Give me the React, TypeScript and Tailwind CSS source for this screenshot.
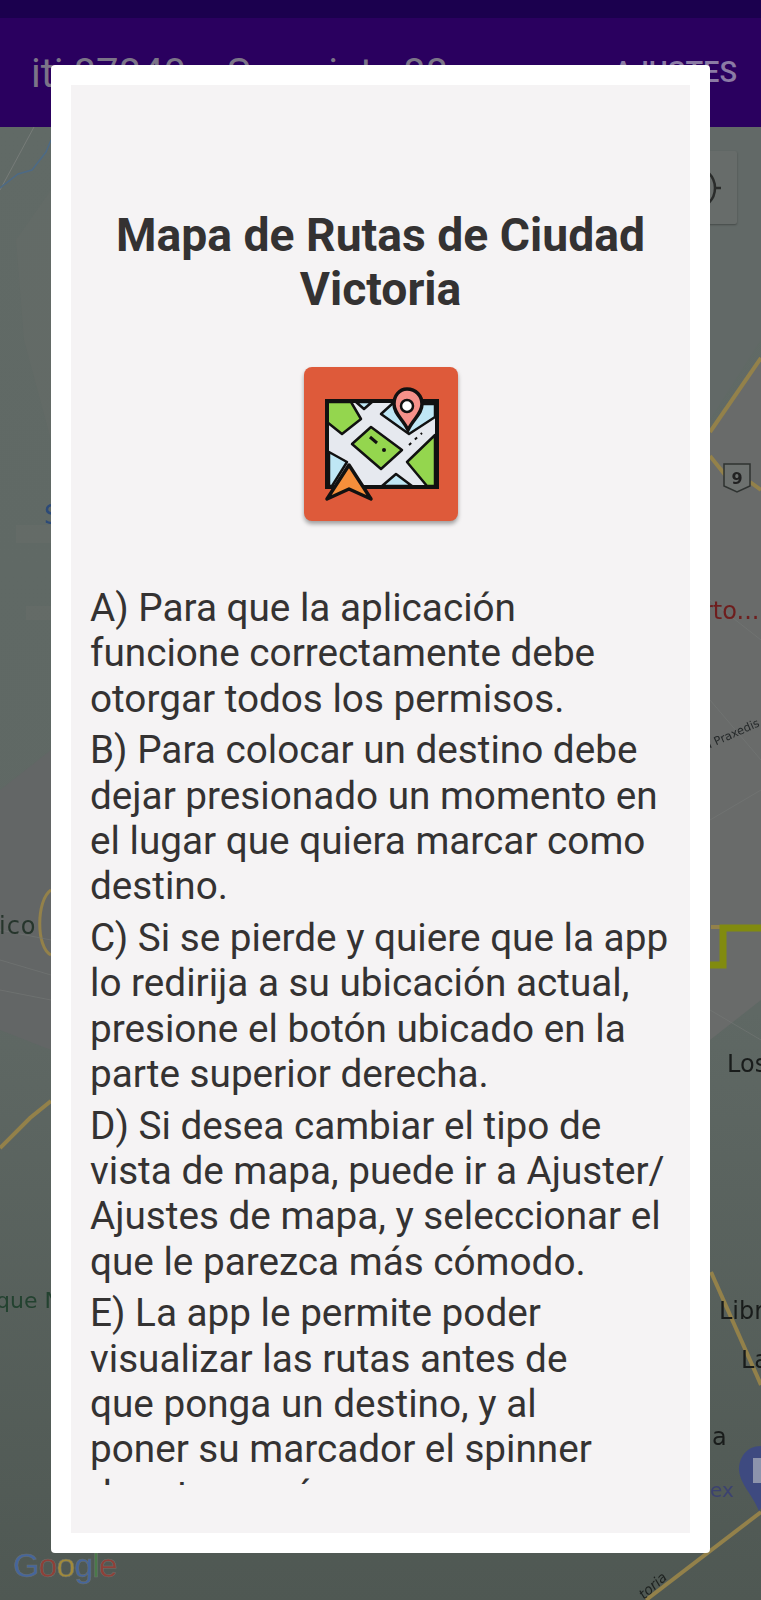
const paragraphs: string[][] = [
  [
    "A) Para que la aplicación",
    "funcione correctamente debe",
    "otorgar todos los permisos.",
  ],
  [
    "B) Para colocar un destino debe",
    "dejar presionado un momento en",
    "el lugar que quiera marcar como",
    "destino.",
  ],
  [
    "C) Si se pierde y quiere que la app",
    "lo redirija a su ubicación actual,",
    "presione el botón ubicado en la",
    "parte superior derecha.",
  ],
  [
    "D) Si desea cambiar el tipo de",
    "vista de mapa, puede ir a Ajuster/",
    "Ajustes de mapa, y seleccionar el",
    "que le parezca más cómodo.",
  ],
  [
    "E) La app le permite poder",
    "visualizar las rutas antes de",
    "que ponga un destino, y al",
    "poner su marcador el spinner",
    "de rutas será",
  ],
];

const mapFont = "'DejaVu Sans', sans-serif";

function MapDrawing() {
  return (
    <svg
      className="absolute inset-0 h-full w-full blur-[0.6px]"
      viewBox="0 127 761 1473"
      preserveAspectRatio="none"
    >
      <defs>
        <linearGradient id="shade" x1="0" y1="0" x2="0" y2="1">
          <stop offset="0" stopColor="#616a66" />
          <stop offset="0.6" stopColor="#5f6864" />
          <stop offset="1" stopColor="#4f5853" />
        </linearGradient>
      </defs>
      <rect x="0" y="127" width="761" height="1473" fill="url(#shade)" />
      <path d="M710 127H761V340L710 420Z" fill="#626967" />
      <path d="M710 430L761 360V1000L710 1040Z" fill="#696b6a" />
      <path d="M0 790L51 750V1050L0 1030Z" fill="#636666" />
      <path d="M16 240L51 190V440L24 340Z" fill="#666b67" opacity="0.5" />
      <rect x="16" y="525" width="35" height="18" fill="#6d6f6c" opacity="0.3" />
      <rect x="26" y="606" width="25" height="14" fill="#6d6f6c" opacity="0.3" />
      <path d="M0 190L34 127" stroke="#777c79" strokeWidth="1" fill="none" />
      <path
        d="M0 188L18 174L32 170L46 152L51 140"
        stroke="#4d6a86"
        strokeWidth="1.5"
        fill="none"
      />
      {/* roads */}
      <g fill="none" stroke="#93814a" strokeWidth="4">
        <path d="M0 1148L30 1118L51 1101" />
        <path d="M710 432L761 358" />
        <path d="M710 456L726 476M750 482L761 490" />
        <path d="M711 1272L761 1385" />
        <path d="M646 1600L761 1512" />
        <path d="M51 890C36 900 36 948 51 955" strokeWidth="3" />
        <path d="M711 927H722" />
      </g>
      <path
        d="M761 928H723V965H710"
        stroke="#818b0f"
        strokeWidth="7"
        fill="none"
      />
      <g stroke="#757876" strokeWidth="1" fill="none" opacity="0.6">
        <path d="M710 600L761 640M710 700L761 760M710 820L761 790" />
        <path d="M0 930L51 940M0 960L51 975M0 990L51 1000" />
        <path d="M710 1010L761 1040" />
      </g>
      {/* route shield */}
      <path
        d="M724 464H750V486L737 492L724 486Z"
        fill="#6d716f"
        stroke="#2f3331"
        strokeWidth="1.5"
      />
      <text x="737" y="484" textAnchor="middle" fontSize="16" fontWeight="700" fontFamily={mapFont} fill="#222">
        9
      </text>
      {/* gas pin */}
      <path
        d="M761 1446C746 1446 739 1458 739 1470C740 1484 752 1494 759 1511L761 1508Z"
        fill="#3e4a80"
      />
      <rect x="753" y="1458" width="8" height="25" fill="#8d94ac" />
      {/* place names behind the dialog */}
      <g fontFamily={mapFont} fontSize="24">
        <text x="44" y="524" fontSize="26" fill="#2c4a78">S</text>
        <text x="-1" y="934" fill="#26352c" letterSpacing="1">ico</text>
        <text x="-4" y="1308" fontSize="22" fill="#234230">que N</text>
        <text x="703" y="619" fill="#6e1d1d">rto...</text>
        <text x="727" y="1072" fill="#191c1b">Los</text>
        <text x="719" y="1319" fill="#191c1b">Libr</text>
        <text x="741" y="1368" fill="#191c1b">La</text>
        <text x="712" y="1445" fill="#191c1b">a</text>
        <text x="710" y="1497" fontSize="20" fill="#3c4270">ex</text>
        <text
          x="706"
          y="750"
          fontSize="11.5"
          fill="#25292a"
          transform="rotate(-24 706 750)"
        >
          d Praxedis
        </text>
        <text
          x="644"
          y="1600"
          fontSize="14"
          fontStyle="italic"
          fill="#1e2220"
          transform="rotate(-42 644 1600)"
        >
          toria
        </text>
      </g>
      <text
        x="13"
        y="1577"
        fontFamily="'Liberation Sans', sans-serif"
        fontSize="34"
        letterSpacing="-1"
        stroke="#6b716e"
        strokeWidth="0.5"
      >
        <tspan fill="#45659c">G</tspan>
        <tspan fill="#8f4038">o</tspan>
        <tspan fill="#a18a3a">o</tspan>
        <tspan fill="#45659c">g</tspan>
        <tspan fill="#4a7a4a">l</tspan>
        <tspan fill="#8f4038">e</tspan>
      </text>
    </svg>
  );
}

function AppIcon() {
  return (
    <div className="flex h-[154px] w-[154px] items-center justify-center rounded-[8px] bg-[#de5a3a] shadow-[0_3px_4px_rgba(0,0,0,0.35)]">
      <svg width="154" height="154" viewBox="0 0 154 154">
        <rect x="23" y="34" width="110" height="86" fill="#e6e9ef" />
        <g stroke="#111" strokeWidth="2.5" strokeLinejoin="round">
          <path d="M23 35H47L57 52L38 67L23 55Z" fill="#94d64e" />
          <path d="M48 77L67 60L98 83L77 102Z" fill="#94d64e" />
          <path d="M103 95L131 68V119H123Z" fill="#94d64e" />
          <path d="M77 47L88 37H131V50L105 67Z" fill="#bfe7f5" />
          <path d="M25 85V119H28L43 95Z" fill="#bfe7f5" />
          <path d="M78 119L92 107L108 119Z" fill="#bfe7f5" />
          <path d="M52 35L60 42L68 35Z" fill="#bfe7f5" />
        </g>
        <path d="M66 70L73 76" stroke="#111" strokeWidth="3" />
        <circle cx="80" cy="83" r="2" fill="#111" />
        <path d="M105 78L118 66" stroke="#111" strokeWidth="2" strokeDasharray="3 5" />
        <rect
          x="23"
          y="34"
          width="110"
          height="86"
          fill="none"
          stroke="#111"
          strokeWidth="4"
        />
        <path
          d="M103 22C112 22 118 29 118 37C118 47 109 52 104 63C99 52 90 47 90 37C90 29 95 22 103 22Z"
          fill="#f5918a"
          stroke="#111"
          strokeWidth="3.5"
        />
        <circle cx="103" cy="39" r="6" fill="#fff" stroke="#111" strokeWidth="2.5" />
        <path
          d="M45 98L67 132L45 122L23 132Z"
          fill="#f58f3b"
          stroke="#111"
          strokeWidth="3.5"
          strokeLinejoin="round"
        />
      </svg>
    </div>
  );
}

export default function App() {
  return (
    <div className="relative flex h-[1600px] w-[761px] flex-col overflow-hidden font-['Roboto',sans-serif]">
      <div className="h-[18px] bg-[#1b004e]" />
      <div className="flex h-[109px] items-start justify-between bg-[#2a005f] pl-[31px] pr-[24px] pt-[31px] text-[40px] leading-[50px] text-[#7b7488]">
        <span>iti 87840 -&nbsp; Sesprint&nbsp;&nbsp; 88</span>
        <span className="text-[29px] font-medium leading-[46px] text-[#8b7ba5]">AJUSTES</span>
      </div>
      <div className="relative flex-1 overflow-hidden">
        <MapDrawing />
        {/* location button */}
        <div className="absolute left-[651px] top-[24px] flex h-[73px] w-[86px] items-center justify-center rounded-[2px] bg-[#676c6a] shadow-[0_1px_2px_rgba(0,0,0,0.3)]">
          <svg width="56" height="56" viewBox="0 0 56 56" fill="none" stroke="#2a2c2b" strokeWidth="2.5">
            <circle cx="28" cy="28" r="21" />
            <path d="M28 1V7M28 49V55M1 28H7M49 28H55" />
          </svg>
        </div>
      </div>

      {/* dialog */}
      <div className="absolute left-[51px] top-[65px] h-[1488px] w-[659px] rounded-[4px] bg-white p-[20px]">
        <div className="flex h-full flex-col items-center overflow-hidden bg-[#f5f3f4] pt-[123px]">
          <h1 className="text-center text-[46.25px] font-bold leading-[54px] text-[#343232]">
            Mapa de Rutas de Ciudad
            <br />
            Victoria
          </h1>
          <div className="mt-[51px]">
            <AppIcon />
          </div>
          <div className="mt-[64px] h-[900px] w-full overflow-hidden pl-[19px] text-[38.7px] leading-[45.3px] text-[#343232]">
            {paragraphs.map((lines) => (
              <p key={lines[0]} className="mb-[6.5px] whitespace-nowrap">
                {lines.map((line) => (
                  <span key={line} className="block">
                    {line}
                  </span>
                ))}
              </p>
            ))}
          </div>
        </div>
      </div>
    </div>
  );
}
